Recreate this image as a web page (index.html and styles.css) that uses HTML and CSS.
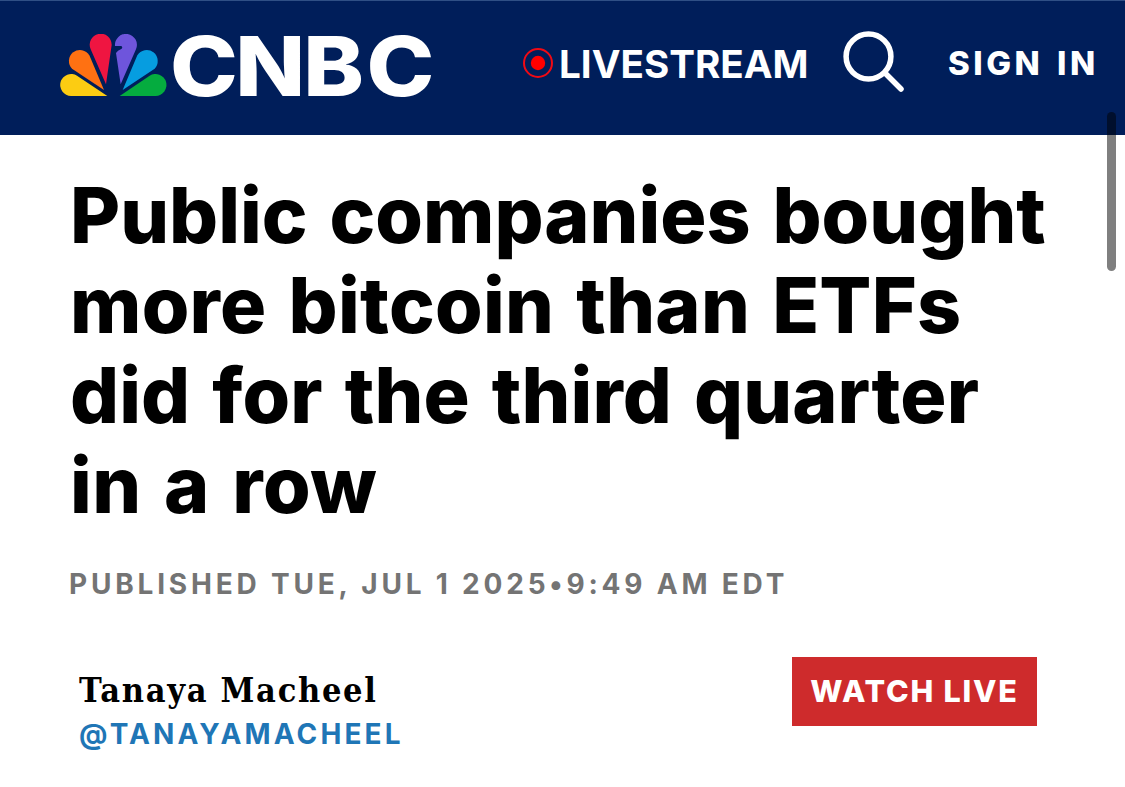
FILE: index.html
```html
<!DOCTYPE html>
<html lang="en">
<head>
  <meta charset="UTF-8" />
  <meta name="viewport" content="width=device-width, initial-scale=1.0"/>
  <title>Public companies bought more bitcoin than ETFs did for the third quarter in a row</title>
  <link rel="stylesheet" href="styles.css">
</head>
<body>

  <header class="header">
    <a class="logo" aria-label="CNBC">
      <svg class="peacock" viewBox="30 42 321 187">
        <path fill="#fccc12" d="M63 228 A33 33 0 1 1 81 167 L172 228 Z"/>
        <path fill="#ff7112" d="M66 146 A33 33 0 1 1 118 106 L162 210 Z"/>
        <path fill="#ef1541" d="M122 88 A33 33 0 1 1 185 75 L168 193 Z"/>
        <path fill="#6e55dc" d="M195 78 A33 33 0 1 1 258 88 L212 193 L198 99 Q202 91 215 86 Q219 82 214 78 Z"/>
        <path fill="#069de0" d="M314 146 A33 33 0 1 0 262 106 L218 210 Z"/>
        <path fill="#05ac3f" d="M317 228 A33 33 0 1 0 299 167 L209 228 Z"/>
      </svg>
      <svg class="wordmark" viewBox="0 0 262 80">
        <text x="-1 58.3 120.3 177.8" y="70" transform="scale(1.1 1)">CNBC</text>
      </svg>
    </a>
    <a class="livestream">
      <svg class="live-icon" viewBox="0 0 30 30">
        <circle cx="15" cy="15" r="14" fill="none" stroke="#f00a14" stroke-width="2"/>
        <circle cx="15" cy="15" r="7.2" fill="#f00"/>
      </svg>
      <span>LIVESTREAM</span>
    </a>
    <svg class="search-icon" viewBox="0 0 62 62">
      <circle cx="25.5" cy="25.5" r="22.4"/>
      <path d="M42 42 L58 58"/>
    </svg>
    <a class="sign-in">SIGN IN</a>
  </header>

  <main class="article">
    <h1 class="headline">
      <span class="line line-1">Public companies bought</span>
      <span class="line line-2">more bitcoin than ETFs</span>
      <span class="line line-3">did for the third quarter</span>
      <span class="line line-4">in a row</span>
    </h1>
    <p class="published">PUBLISHED TUE, JUL 1 2025•9:49 AM EDT</p>
    <div class="byline">
      <div class="author">
        <a class="author-name">Tanaya Macheel</a>
        <a class="author-handle">@TANAYAMACHEEL</a>
      </div>
      <button class="watch-live">WATCH LIVE</button>
    </div>
  </main>

  <div class="scrollbar"></div>

</body>
</html>
```
FILE: styles.css
```css
body {
  margin: 0;
  font-family: Inter, 'Liberation Sans', sans-serif;
  background-color: #fff;
  color: #000;
  height: 787px;
  overflow: hidden;
}

.header {
  display: flex;
  align-items: flex-start;
  box-sizing: border-box;
  height: 135px;
  padding-left: 60px;
  background-color: #001e5a;
  border-top: 1px solid #2f4f85;
  color: #fff;
  white-space: nowrap;
}

.logo {
  display: flex;
  width: 463px;
}

.peacock {
  width: 107px;
  height: 62.3px;
  margin-top: 33px;
}

.wordmark {
  width: 262px;
  height: 80px;
  margin: 25px 0 0 4px;
  overflow: visible;
}

.wordmark text {
  font-size: 83px;
  font-weight: 780;
  fill: #fff;
}

.livestream {
  display: flex;
  width: 320px;
  gap: 6px;
  font-size: 38.6px;
  font-weight: 700;
  line-height: 46px;
  margin-top: 40px;
}

.live-icon {
  width: 30px;
  height: 30px;
  margin-top: 7px;
}

.search-icon {
  width: 62px;
  height: 62px;
  margin-top: 30px;
  margin-right: 43px;
  fill: none;
  stroke: #fff;
  stroke-width: 5.5;
  stroke-linecap: round;
}

.sign-in {
  font-size: 33px;
  font-weight: 850;
  line-height: 40px;
  letter-spacing: 3.5px;
  word-spacing: 3px;
  margin-top: 42px;
}

.article {
  padding: 35px 88px 0 70px;
}

.headline {
  margin: 0;
  font-size: 77px;
  font-weight: 800;
  line-height: 90px;
}

.line {
  display: block;
  white-space: nowrap;
  word-spacing: 5px;
}

.line-2 {
  letter-spacing: 0.25px;
}

.line-3 {
  letter-spacing: 0.1px;
}

.line-4 {
  letter-spacing: 0.5px;
}

.published {
  margin: 36px 0 0 -1px;
  font-size: 28px;
  font-weight: 750;
  line-height: 36px;
  letter-spacing: 3.8px;
  color: #747474;
  white-space: nowrap;
}

.byline {
  display: flex;
  justify-content: space-between;
  align-items: flex-start;
  margin-top: 55px;
}

.author {
  display: flex;
  flex-direction: column;
  padding: 11px 0 0 9px;
}

.author-name {
  font-family: 'DejaVu Serif Condensed', 'DejaVu Serif', serif;
  font-size: 34px;
  font-weight: bold;
  line-height: 44px;
  letter-spacing: 1.7px;
}

.author-handle {
  font-size: 28px;
  font-weight: 750;
  line-height: 36px;
  letter-spacing: 3.1px;
  color: #1f76b6;
  margin-top: 4px;
}

.watch-live {
  width: 245px;
  height: 69px;
  padding: 0 0 2px;
  border: none;
  background-color: #ce2b2c;
  color: #fff;
  font-family: Inter, 'Liberation Sans', sans-serif;
  font-size: 30.5px;
  font-weight: 800;
  letter-spacing: 1.8px;
  white-space: nowrap;
}

.scrollbar {
  position: absolute;
  top: 112px;
  left: 1107px;
  width: 9px;
  height: 159px;
  border-radius: 5px;
  background-color: rgba(0, 0, 0, 0.5);
}
```
